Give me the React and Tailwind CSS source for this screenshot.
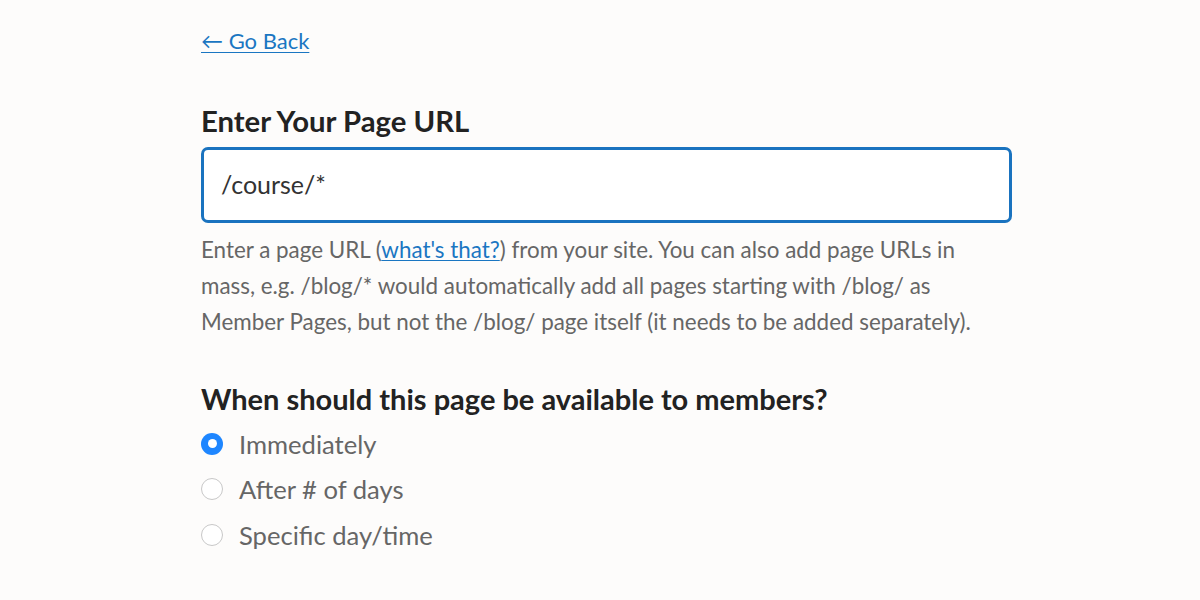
export default function App() {
  const options = ["Immediately", "After # of days", "Specific day/time"];

  return (
    <div className="min-h-[600px] bg-[#fdfcfb] pt-[27px] font-['Lato','Liberation_Sans',sans-serif]">
      <div className="ml-[201px] w-[811px]">
        <a href="#" className="text-[22px] leading-[28px] text-[#1a76c2] underline underline-offset-[3px] decoration-1">
          ← Go Back
        </a>

        <h2 className="mt-[48px] text-[29.3px] leading-[36px] font-bold text-[#222]">Enter Your Page URL</h2>

        <div className="mt-[8px] h-[76px] rounded-[7px] border-[3px] border-[#1a73bf] bg-white flex items-center px-[17px] text-[25px] text-[#333]">
          /course/*
        </div>

        <p className="mt-[9px] text-[22.4px] leading-[36px] text-[#666]">
          Enter a page URL (
          <a href="#" className="text-[#1a76c2] underline underline-offset-2 decoration-1">what's that?</a>
          ) from your site. You can also add page URLs in mass, e.g. /blog/* would automatically add all pages starting with /blog/ as Member Pages, but not the /blog/ page itself (it needs to be added separately).
        </p>

        <h2 className="mt-[41px] text-[29px] leading-[36px] font-bold text-[#222]">
          When should this page be available to members?
        </h2>

        <div className="mt-[4px] flex flex-col">
          {options.map((o, i) => (
            <label key={o} className="flex items-center h-[45.5px] gap-[16px] text-[25.6px] text-[#666]">
              {i === 0 ? (
                <span className="w-[22px] h-[22px] rounded-full bg-[#1e86ff] flex items-center justify-center">
                  <span className="w-[9px] h-[9px] rounded-full bg-white" />
                </span>
              ) : (
                <span className="w-[22px] h-[22px] rounded-full border border-[#c8c8c8] bg-white" />
              )}
              {o}
            </label>
          ))}
        </div>
      </div>
    </div>
  );
}
